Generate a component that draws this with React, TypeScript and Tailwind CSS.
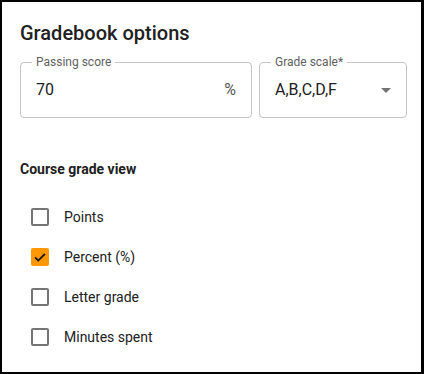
import React from "react";

function Check({ checked }: { checked?: boolean }) {
  if (checked) {
    return (
      <span className="flex h-[18px] w-[18px] items-center justify-center rounded-[2px] bg-[#ff9800]">
        <svg width="14" height="14" viewBox="0 0 24 24" fill="none">
          <path d="M3.5 12.5l5.5 5.5L20.5 6.5" stroke="#111" strokeWidth="3" />
        </svg>
      </span>
    );
  }
  return <span className="block h-[18px] w-[18px] rounded-[2px] border-2 border-[#757575]" />;
}

export default function App() {
  const items = [
    { label: "Points", checked: false },
    { label: "Percent (%)", checked: true },
    { label: "Letter grade", checked: false },
    { label: "Minutes spent", checked: false },
  ];
  return (
    <div className="h-[374px] w-[424px] bg-black pb-[2px] pl-[2px] pr-[3px] pt-[2px]" style={{ fontFamily: "Roboto, 'Liberation Sans', sans-serif" }}>
      <div className="h-full w-full bg-white pl-[18px]">
        <div className="pt-[17px] text-[20px] font-medium leading-[28px] text-[#212121]">Gradebook options</div>
        <div className="mt-[15px] flex gap-[7px]">
          <div className="relative flex h-[56px] w-[232px] items-center justify-between rounded-[4px] border border-[#c4c4c4] px-[15px]">
            <span className="absolute left-[11px] top-[-9px] bg-white px-[4px] text-[12px] leading-[16px] text-[#5f5f5f]">Passing score</span>
            <span className="text-[16px] text-[#212121]">70</span>
            <span className="text-[16px] text-[#555]">%</span>
          </div>
          <div className="relative flex h-[56px] w-[148px] items-center justify-between rounded-[4px] border border-[#c4c4c4] pl-[15px] pr-[15px]">
            <span className="absolute left-[11px] top-[-9px] bg-white px-[4px] text-[12px] leading-[16px] text-[#5f5f5f]">Grade scale*</span>
            <span className="text-[16px] text-[#212121]">A,B,C,D,F</span>
            <svg width="10" height="5" viewBox="0 0 10 5">
              <path d="M0 0h10L5 5z" fill="#757575" />
            </svg>
          </div>
        </div>
        <div className="mt-[41px] text-[14px] font-bold leading-[20px] text-[#212121]">Course grade view</div>
        <div className="mt-[18px] flex flex-col">
          {items.map((it) => (
            <div key={it.label} className="flex h-[40px] items-center pl-[11px]">
              <Check checked={it.checked} />
              <span className="ml-[15px] text-[14px] text-[#212121]">{it.label}</span>
            </div>
          ))}
        </div>
      </div>
    </div>
  );
}
